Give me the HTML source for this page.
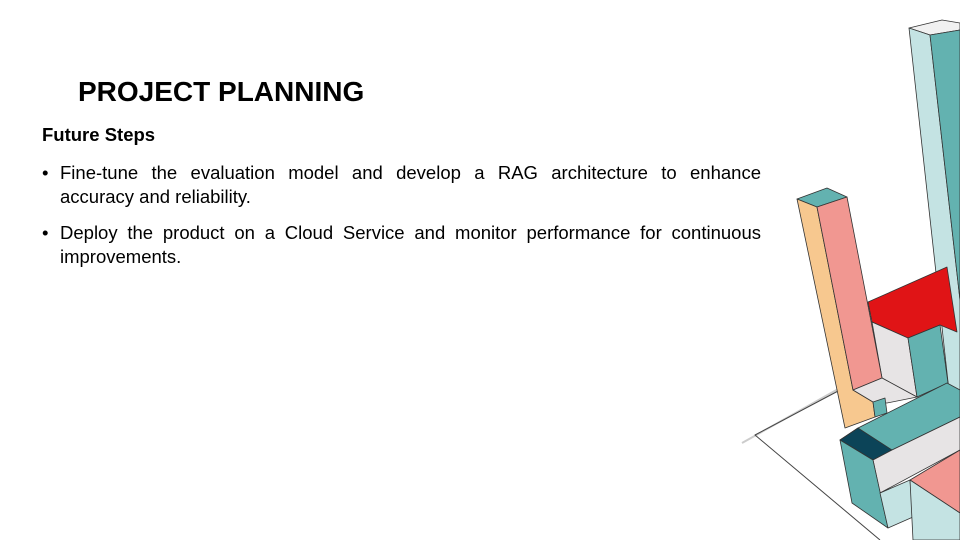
<!DOCTYPE html>
<html><head><meta charset="utf-8"><style>
html,body{margin:0;padding:0;background:#fff}
body{width:960px;height:540px;position:relative;overflow:hidden;font-family:"Liberation Sans",Arial,sans-serif;color:#000}
h1{position:absolute;left:78px;top:74px;margin:0;font-size:28px;font-weight:bold;line-height:36px}
.sub{position:absolute;left:42px;top:124px;font-size:18.5px;font-weight:bold;line-height:22px}
ul{position:absolute;left:42px;top:161px;width:719px;margin:0;padding:0;list-style:none;font-size:18.5px;line-height:24px}
li{position:relative;padding-left:18px;margin-bottom:12px}
li:before{content:"•";position:absolute;left:0;top:0}
.j{display:block;text-align:justify;text-align-last:justify}
svg{position:absolute;left:0;top:0}
</style></head><body>
<h1>PROJECT PLANNING</h1>
<div class="sub">Future Steps</div>
<ul>
<li><span class="j">Fine-tune the evaluation model and develop a RAG architecture to enhance</span>accuracy and reliability.</li>
<li><span class="j">Deploy the product on a Cloud Service and monitor performance for continuous</span>improvements.</li>
</ul>
<svg width="960" height="540" viewBox="0 0 960 540">
<g stroke="#333" stroke-width="0.8" stroke-linejoin="round">
<polyline points="742,443 840,388" fill="none" stroke="#ccc" stroke-width="2"/>
<polyline points="840,390 755,435 880,540" fill="none" stroke="#444" stroke-width="1"/>
<polygon points="909,28 942,20 960,23 960,30 930,35" fill="#f1f1f1"/>
<polygon points="909,28 930,35 960,300 960,540 950,400" fill="#c4e3e3"/>
<polygon points="930,35 960,30 960,300" fill="#63b2b0"/>
<polygon points="868,302 947,267 957,332 940,325 908,338 872,322" fill="#e01416"/>
<polygon points="872,322 908,338 917,397 882,378" fill="#e7e4e5"/>
<polygon points="908,338 940,325 948,383 917,397" fill="#63b2b0"/>
<polygon points="797,199 827,188 847,197 817,207" fill="#63b2b0"/>
<polygon points="797,199 817,207 853,390 873,402 875,417 845,428" fill="#f7c88f"/>
<polygon points="817,207 847,197 882,378 853,390" fill="#f19791"/>
<polygon points="853,390 882,378 917,397 887,403 873,402" fill="#e7e4e5"/>
<polygon points="873,402 885,398 887,413 875,417" fill="#63b2b0"/>
<polygon points="840,440 858,428 947,383 960,390 960,417 892,450" fill="#63b2b0"/>
<polygon points="840,440 858,428 892,450 873,460" fill="#0c4458"/>
<polygon points="873,460 892,450 960,417 960,450 880,493" fill="#e7e4e5"/>
<polygon points="840,440 873,460 888,528 852,503" fill="#63b2b0"/>
<polygon points="880,493 910,480 913,517 888,528" fill="#c4e3e3"/>
<polygon points="910,480 960,450 960,513" fill="#f19791"/>
<polygon points="910,480 960,513 960,540 913,540" fill="#c4e3e3"/>
</g>
</svg>
</body></html>
